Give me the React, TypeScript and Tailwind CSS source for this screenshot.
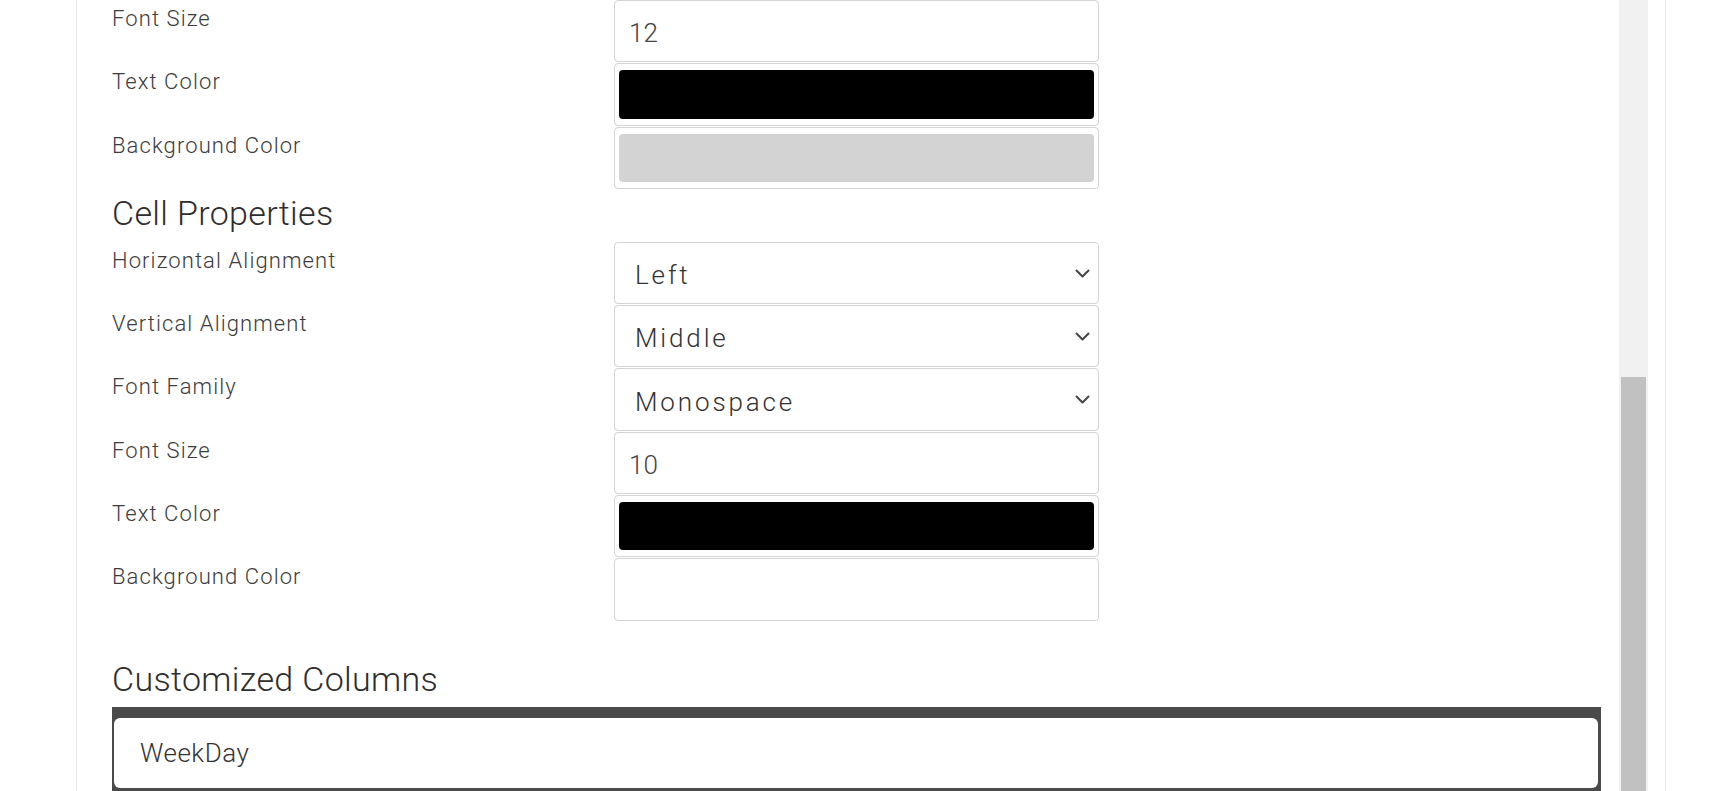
import React from 'react';

const labelCls = 'pt-[3px] text-[22px] leading-[32px] font-light tracking-[0.05em] text-[#3c3c3c]';
const boxCls = 'h-[62.3px] w-[485px] rounded-[4px] border border-[#d4d4d4] bg-white';

const Chevron = () => (
    <svg width="15" height="9" viewBox="0 0 15 9" fill="none" className="shrink-0">
        <path d="M1.5 1.5 L7.5 7.5 L13.5 1.5" stroke="#454545" strokeWidth="2" strokeLinecap="round" strokeLinejoin="round" />
    </svg>
);

const NumberRow = ({ label, value }: { label: string; value: string }) => (
    <div className="grid grid-cols-[502px_485px]">
        <div className={labelCls}>{label}</div>
        <input
            type="text"
            defaultValue={value}
            className={`${boxCls} px-[14px] pt-[4px] text-[26px] font-light text-[#444] outline-none`}
        />
    </div>
);

const ColorRow = ({ label, color }: { label: string; color: string }) => (
    <div className="grid grid-cols-[502px_485px]">
        <div className={labelCls}>{label}</div>
        <div className={`${boxCls} px-[4px] py-[6px]`}>
            <div className="h-full w-full rounded-[4px]" style={{ backgroundColor: color }}></div>
        </div>
    </div>
);

const SelectRow = ({ label, value }: { label: string; value: string }) => (
    <div className="grid grid-cols-[502px_485px]">
        <div className={labelCls}>{label}</div>
        <div className={`${boxCls} flex items-center justify-between pl-[20px] pr-[8px]`}>
            <span className="pt-[5px] text-[26px] font-light tracking-[0.11em] text-[#333]">{value}</span>
            <Chevron />
        </div>
    </div>
);

const Heading = ({ children, className }: { children: React.ReactNode; className: string }) => (
    <h2 className={`text-[34px] leading-[40px] font-light tracking-[0.01em] text-[#2e2e2e] ${className}`}>{children}</h2>
);

const App = () => {
    return (
        <div className="h-[791px] overflow-hidden bg-white font-[Roboto,sans-serif]">
            <div className="ml-[76px] flex h-full w-[1590px] border-x border-[#e8e8e8]">
                <div className="flex-1 pl-[35px] pr-[18px]">
                    {/* text properties (tail of previous section) */}
                    <div className="flex flex-col gap-px">
                        <NumberRow label="Font Size" value="12" />
                        <ColorRow label="Text Color" color="#000000" />
                        <ColorRow label="Background Color" color="#d3d3d3" />
                    </div>

                    <Heading className="mt-[4px]">Cell Properties</Heading>
                    <div className="mt-[9px] flex flex-col gap-px">
                        <SelectRow label="Horizontal Alignment" value="Left" />
                        <SelectRow label="Vertical Alignment" value="Middle" />
                        <SelectRow label="Font Family" value="Monospace" />
                        <NumberRow label="Font Size" value="10" />
                        <ColorRow label="Text Color" color="#000000" />
                        <ColorRow label="Background Color" color="#ffffff" />
                    </div>

                    <Heading className="mt-[38px]">Customized Columns</Heading>
                    <div className="mt-[8px] bg-[#4a4a4a] pb-[3px] pl-[2px] pr-[3px] pt-[11px]">
                        <div className="flex h-[70px] items-center rounded-[6px] bg-white pl-[26px]">
                            <span className="text-[26px] leading-[26px] font-light tracking-[0.02em] text-[#333]">WeekDay</span>
                        </div>
                    </div>
                </div>

                {/* scrollbar */}
                <div className="w-[29px] bg-[#f1f1f1] px-[2px]">
                    <div className="mt-[377px] h-[420px] bg-[#c1c1c1]"></div>
                </div>
                <div className="w-[17px]"></div>
            </div>
        </div>
    );
};

export default App;
